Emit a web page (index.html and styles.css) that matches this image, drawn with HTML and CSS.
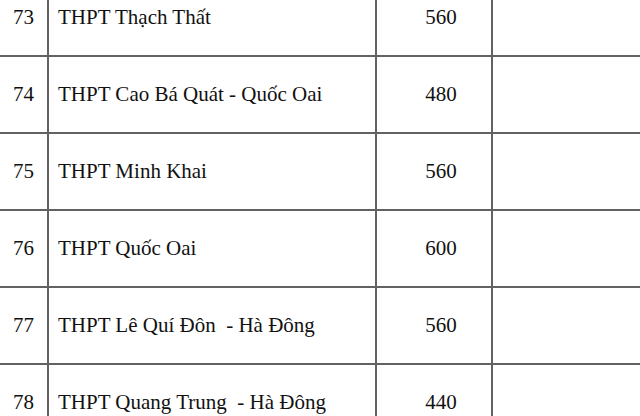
FILE: index.html
```html
<!DOCTYPE html>
<html lang="vi">
<head>
<meta charset="utf-8">
<link rel="stylesheet" href="styles.css">
</head>
<body>
<table class="grid">
  <colgroup>
    <col class="c-no">
    <col class="c-name">
    <col class="c-num">
    <col class="c-note">
  </colgroup>
  <tbody>
    <tr><td class="no">73</td><td class="name">THPT Thạch Thất</td><td class="num">560</td><td class="note"></td></tr>
    <tr><td class="no">74</td><td class="name">THPT Cao Bá Quát - Quốc Oai</td><td class="num">480</td><td class="note"></td></tr>
    <tr><td class="no">75</td><td class="name">THPT Minh Khai</td><td class="num">560</td><td class="note"></td></tr>
    <tr><td class="no">76</td><td class="name">THPT Quốc Oai</td><td class="num">600</td><td class="note"></td></tr>
    <tr><td class="no">77</td><td class="name">THPT Lê Quí Đôn&nbsp; - Hà Đông</td><td class="num">560</td><td class="note"></td></tr>
    <tr><td class="no">78</td><td class="name">THPT Quang Trung&nbsp; - Hà Đông</td><td class="num">440</td><td class="note"></td></tr>
  </tbody>
</table>
</body>
</html>
```

FILE: styles.css
```css
body {
  margin: 0;
  background: #ffffff;
  font-family: "Liberation Serif", serif;
}

.grid {
  margin-top: -21px;
  border-collapse: collapse;
  table-layout: fixed;
  width: 640px;
  font-size: 21px;
  color: #111111;
}

.c-no { width: 48px; }
.c-name { width: 328px; }
.c-num { width: 116px; }
.c-note { width: 148px; }

.grid td {
  height: 77px;
  box-sizing: border-box;
  padding: 0;
  vertical-align: middle;
  border: 2px solid #626262;
  white-space: nowrap;
}

.grid tr:first-child td { border-top: none; }
.grid td.no { border-left: none; text-align: center; }
.grid td.name { padding-left: 9px; text-align: left; }
.grid td.num { text-align: center; padding-left: 14px; }
.grid td.note { border-right: none; }
```
